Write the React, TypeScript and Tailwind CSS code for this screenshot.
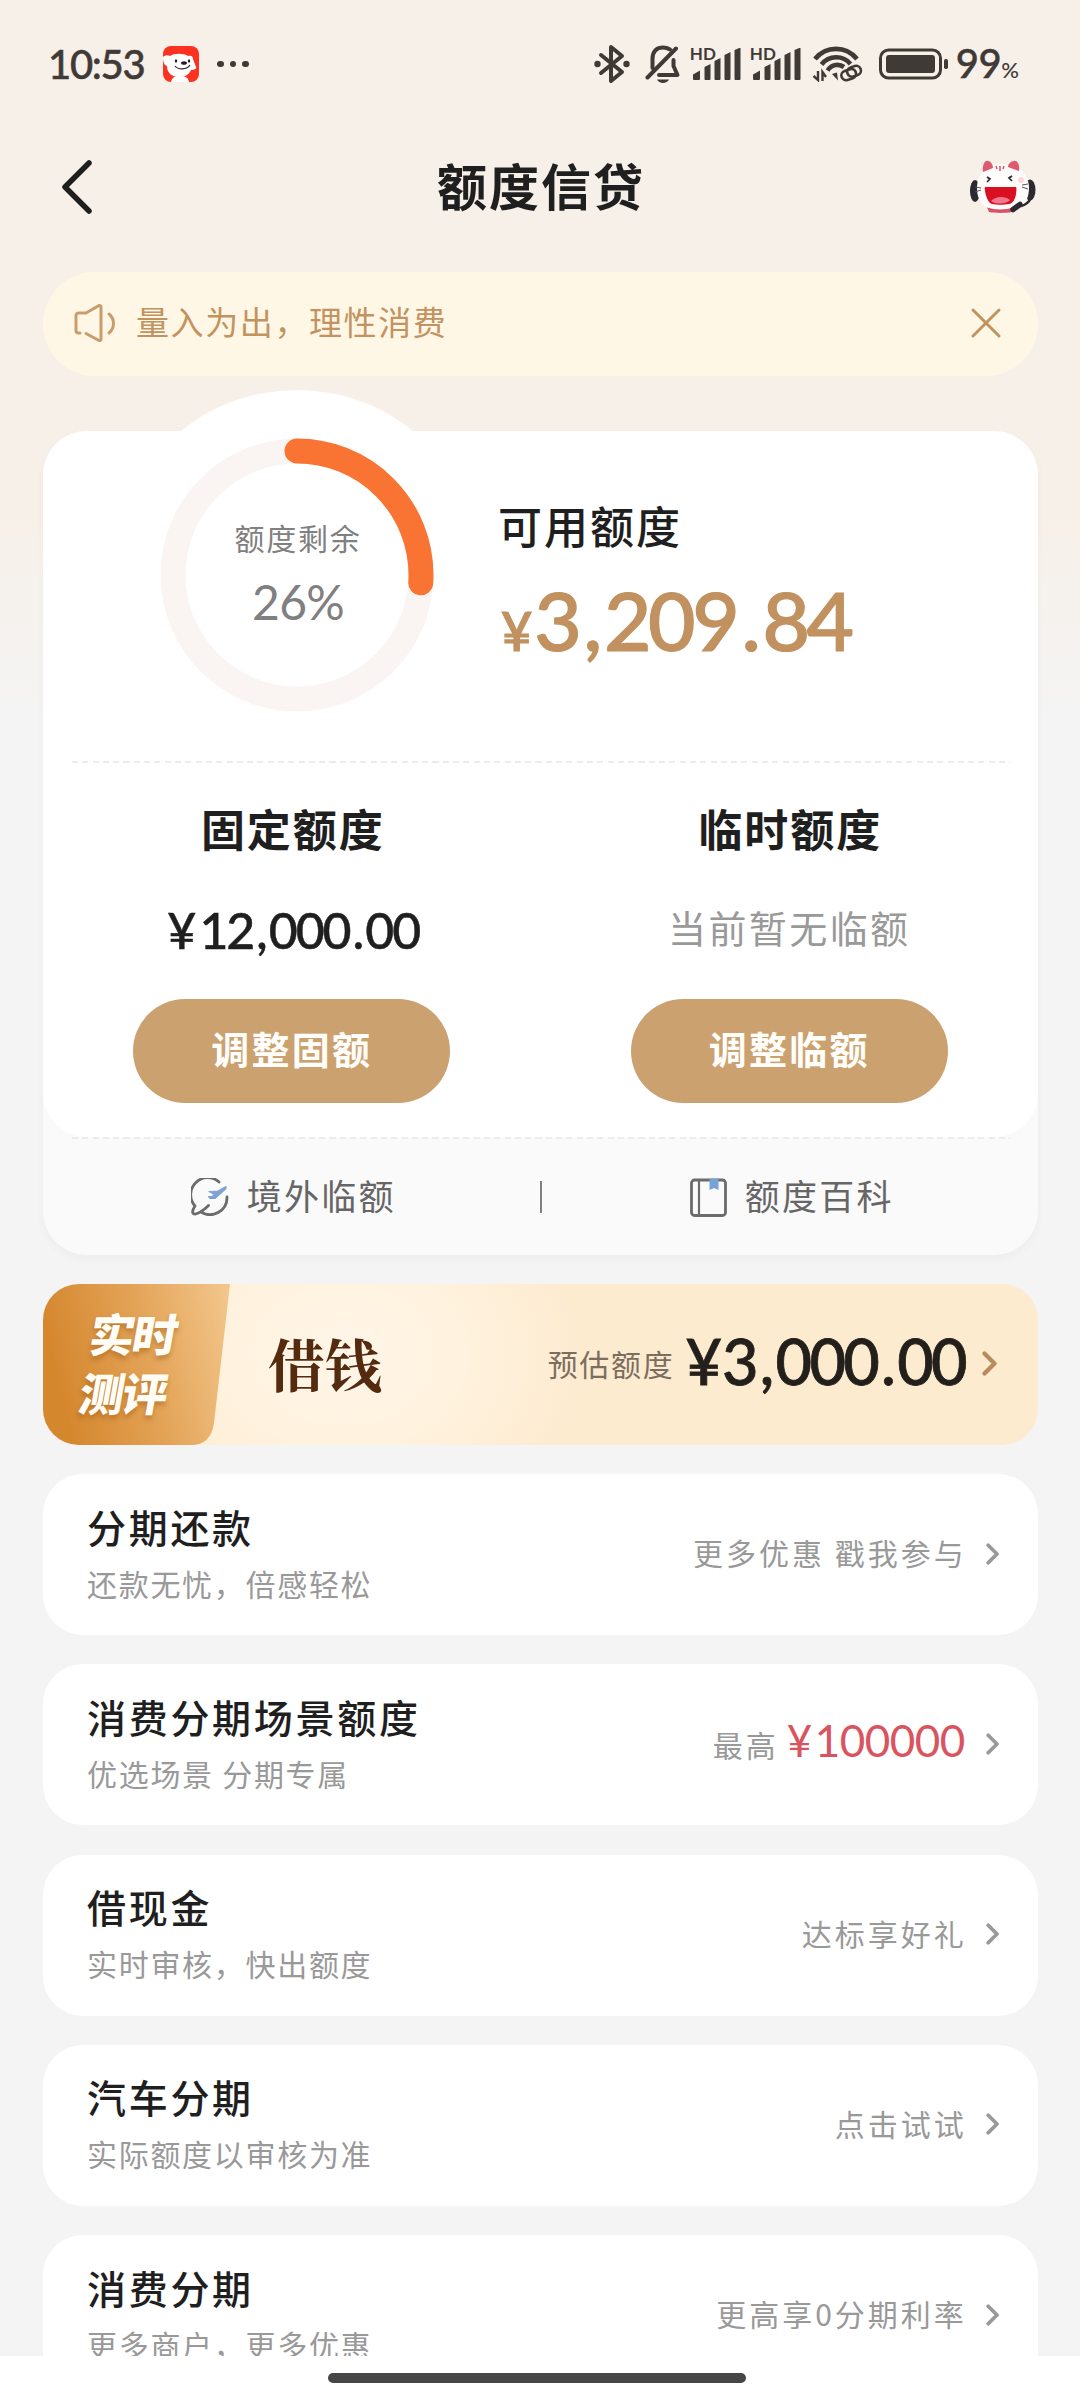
import type { ReactNode } from 'react';

type Product = {
    title: string;
    desc: string;
    hint: string;
    amount?: string;
};

const products: Product[] = [
    { title: '分期还款', desc: '还款无忧，倍感轻松', hint: '更多优惠 戳我参与' },
    { title: '消费分期场景额度', desc: '优选场景 分期专属', hint: '最高', amount: '100000' },
    { title: '借现金', desc: '实时审核，快出额度', hint: '达标享好礼' },
    { title: '汽车分期', desc: '实际额度以审核为准', hint: '点击试试' },
    { title: '消费分期', desc: '更多商户，更多优惠', hint: '更高享0分期利率' },
];

/* ---------- Icons ---------- */

function AppIcon() {
    return (
        <svg width="36" height="36" viewBox="0 0 36 36">
            <rect width="36" height="36" rx="8" fill="#fb3220" />
            <path d="M8 36c1-5 4-6 9-6s8 1 9 6z" fill="#fff" />
            <path d="M0 11c2-2 5-2 7-1 4-3 14-3 18 0 3-1 5 0 5 3l3 8c1 2-2 3-5 3-2 5-7 7-12 7C9 31 4 27 4 20c-3-1-4-4-4-9z" fill="#fff" />
            <ellipse cx="13" cy="15" rx="1.2" ry="1.8" fill="#222" />
            <ellipse cx="26" cy="15" rx="1.2" ry="1.8" fill="#222" />
            <ellipse cx="21" cy="17" rx="3" ry="1.8" fill="#222" />
            <path d="M12 20c3 4 12 4 15-1" fill="none" stroke="#222" strokeWidth="1.2" />
        </svg>
    );
}

function BluetoothIcon() {
    return (
        <svg width="36" height="40" viewBox="0 0 36 40" fill="none" stroke="#403a36" strokeWidth="4" strokeLinecap="round" strokeLinejoin="round">
            <path d="M7 11 L28 28 L17 37 V3 L28 12 L7 29" />
            <circle cx="3.5" cy="20" r="3.200" fill="#403a36" stroke="none" />
            <circle cx="32.5" cy="20" r="3.200" fill="#403a36" stroke="none" />
        </svg>
    );
}

function BellOffIcon() {
    return (
        <svg width="36" height="40" viewBox="0 0 36 40" fill="none" stroke="#403a36" strokeWidth="4" strokeLinecap="round" strokeLinejoin="round">
            <path d="M2.500 33.500 L31 4.500" />
            <path d="M7.500 24 V15 C7.500 7 12 3.500 18 3.500 C21 3.500 23 4.200 25 5.500" />
            <path d="M28.500 16 V22 L32.500 31 H14" />
            <path d="M12 35.500 H24 C22 40 14 40 12 35.500z" fill="#403a36" stroke="none" />
        </svg>
    );
}

function SignalIcon() {
    return (
        <div className="relative h-[32px] w-[50px]">
            <span className="absolute -top-[3px] -left-px text-[17px] leading-[17px] font-bold [font-family:Lato,sans-serif]">HD</span>
            <svg className="absolute top-0 left-[2px]" width="48" height="32" viewBox="0 0 48 32" fill="#403a36">
                <path d="M0 26.500l7-4v8.500q0 1-1 1H1q-1 0-1-1z M11.500 19l6-3v15q0 1-1 1h-4q-1 0-1-1z M21.500 13l6-3v21q0 1-1 1h-4q-1 0-1-1z M31.500 7l6-3v27q0 1-1 1h-4q-1 0-1-1z M41.500 2l6-2.500v31.500q0 1-1 1h-4q-1 0-1-1z" />
            </svg>
        </div>
    );
}

function WifiIcon() {
    return (
        <svg width="50" height="36" viewBox="0 0 50 36" fill="none" stroke="#403a36">
            <path d="M2 13 C13 -0.500 33 -0.500 44 13" strokeWidth="4.600" />
            <path d="M8.500 18.500 C16 9 30 9 37.500 18" strokeWidth="4.600" />
            <path d="M14.500 24.500 C19 18 26 17.500 31 21" strokeWidth="4.600" />
            <path d="M19 28 L24 26.500 L25 34.500z" fill="#403a36" stroke="none" />
            <path d="M5 25 V34 L0.500 30 M9.500 35 V26 L13 31" strokeWidth="2.400" />
            <rect x="28" y="24" width="15" height="9.500" rx="4.750" strokeWidth="2.600" transform="rotate(-18 35 28)" />
            <rect x="34" y="20.500" width="14" height="9.500" rx="4.750" strokeWidth="2.600" transform="rotate(-18 41 25)" />
        </svg>
    );
}

function BatteryIcon() {
    return (
        <svg width="70" height="32" viewBox="0 0 70 32">
            <rect x="1.500" y="2" width="60" height="28" rx="8" fill="none" stroke="#403a36" strokeWidth="3" />
            <rect x="7" y="7" width="49" height="18" rx="3" fill="#403a36" />
            <rect x="65" y="11" width="4" height="10" rx="1.800" fill="#403a36" />
        </svg>
    );
}

// Customer service mascot with a headset
function MascotIcon() {
    return (
        <svg width="66" height="54" viewBox="0 0 66 54">
            <ellipse cx="5" cy="31" rx="5" ry="11" fill="#2d2930" />
            <ellipse cx="60" cy="30" rx="5.500" ry="10.500" fill="#2d2930" />
            <path d="M7 28C7 13 17 4 32 4s27 9 27 24-9 23-26 23S7 43 7 28z" fill="#fffcfc" />
            <path d="M13 12c-1-7 2-12 5-11 3 0 5 4 5 7z" fill="#df5a6e" />
            <path d="M49 11c1-7-2-11-5-10-3 0-6 3-6 6z" fill="#df5a6e" />
            <path d="M17 47.500c8 2.500 19 2.500 26 0l-1 4.500c-7 1.200-17 1.200-23 0z" fill="#dc5064" />
            <path d="M15 27h31c1 0 1 16-7 17-5 1-12 1-17 0-6-2-8-17-7-17z" fill="#d90f22" />
            <path d="M21 41c5-5 14-5 19-1-3 4-14 5-19 1z" fill="#f0788a" />
            <path d="M26 6l1 3M30 6v5M34 6l-1 3" stroke="#dc5064" strokeWidth="1.500" />
            <path d="M17 17l3 2-3 3M42 16l-3 2 3 3" fill="none" stroke="#2d2930" strokeWidth="1.700" />
            <path d="M5 27l6 1M5 32l6-2M58 24l-6 1M58 29l-6-2" stroke="#555" strokeWidth="1" />
            <circle cx="51" cy="20" r="3" fill="#fdd7dc" />
            <path d="M61 38c-2 4-5 7-10 8" fill="none" stroke="#2d2930" strokeWidth="2.500" />
            <path d="M50 44.500l-7 5" stroke="#2d2930" strokeWidth="5.500" strokeLinecap="round" />
        </svg>
    );
}

function SpeakerIcon() {
    return (
        <svg width="42" height="40" viewBox="0 0 42 40" fill="none" stroke="#c99d6b" strokeWidth="3" strokeLinecap="round" strokeLinejoin="round">
            <path d="M6 30 H4.500 A2.500 2.500 0 0 1 2 27.500 V12.500 A2.500 2.500 0 0 1 4.500 10 H12 L25 2.500 A1.500 1.500 0 0 1 27 4 V36 A1.500 1.500 0 0 1 25 37.500 L12 30.500" />
            <path d="M35 11 C41 16 41 25 35 30" />
        </svg>
    );
}

function OverseasIcon() {
    return (
        <svg width="38" height="38" viewBox="0 0 38 38" fill="none" strokeLinecap="round" strokeLinejoin="round">
            <path d="M28 4 A17 17 0 0 0 4 28 C0.500 33 1 36.500 4.500 36 C9 35 14 31 17.500 27.500" stroke="#6b6b6b" strokeWidth="2.800" />
            <path d="M36 19 A17 17 0 0 1 10 34" stroke="#6b6b6b" strokeWidth="2.800" />
            <path d="M35 8.500 L27 13 L18 13.500 L23.500 16.500 L21 18.500 L17.500 18.500 L19 20.500 H24 L35 10.500z" fill="#7ea3d0" stroke="#7ea3d0" strokeWidth="1.200" />
        </svg>
    );
}

function BookIcon() {
    return (
        <svg width="37" height="39" viewBox="0 0 37 39" fill="none">
            <rect x="1.500" y="2" width="34" height="35.500" rx="3" stroke="#6b6b6b" strokeWidth="2.800" />
            <path d="M9 2 V37" stroke="#6b6b6b" strokeWidth="2.200" />
            <path d="M19.500 0.500 h9 v11.500 l-4.500-2 l-4.500 2z" fill="#78a3d6" />
        </svg>
    );
}

function Chevron({ size, color }: { size: number; color: string }) {
    return (
        <svg width={size * 0.6} height={size} viewBox="0 0 12 20" fill="none">
            <path d="M2 2 L10 10 L2 18" stroke={color} strokeWidth="3.400" strokeLinecap="round" strokeLinejoin="round" />
        </svg>
    );
}

// Tight digits with roomy commas and dots
function Money({ value }: { value: string }) {
    return (
        <span className="tracking-[-0.042em]">
            {value.split(/([.,])/).map((part, i) =>
                part === '.' || part === ',' ? (
                    <span key={i} className="px-[0.062em]">{part}</span>
                ) : (
                    part
                )
            )}
        </span>
    );
}

/* ---------- Sections ---------- */

function StatusBar() {
    return (
        <div className="flex h-[128px] shrink-0 items-center pl-[48px] text-[#403a36] [font-family:Lato,sans-serif]">
            <span className="w-[115px] text-[40px] leading-[40px] font-medium tracking-[-1.300px] [-webkit-text-stroke:0.5px_#403a36]">10:53</span>
            <AppIcon />
            <div className="ml-[18px] flex gap-[6px]">
                <i className="size-[6.500px] rounded-full bg-[#403a36]" />
                <i className="size-[6.500px] rounded-full bg-[#403a36]" />
                <i className="size-[6.500px] rounded-full bg-[#403a36]" />
            </div>
            <div className="ml-auto flex items-center pr-[61px]">
                <BluetoothIcon />
                <div className="ml-[15px]"><BellOffIcon /></div>
                <div className="ml-[10px]"><SignalIcon /></div>
                <div className="ml-[10px]"><SignalIcon /></div>
                <div className="ml-[12px]"><WifiIcon /></div>
                <div className="ml-[16px]"><BatteryIcon /></div>
                <span className="ml-[7px] flex items-baseline font-medium">
                    <span className="text-[40px] leading-[40px] tracking-[-0.500px] [-webkit-text-stroke:0.5px_#403a36]">99</span>
                    <span className="text-[22px]">%</span>
                </span>
            </div>
        </div>
    );
}

function TitleBar() {
    return (
        <header className="flex h-[118px] shrink-0 items-center justify-between pr-[44px] pl-[60px]">
            <svg width="34" height="56" viewBox="0 0 34 56" fill="none">
                <path d="M29 4 L5 28 L29 52" stroke="#1f1f1f" strokeWidth="5.500" strokeLinecap="round" strokeLinejoin="round" />
            </svg>
            <h1 className="ml-[18px] pb-[6px] text-[50px] leading-[60px] font-bold tracking-[2px] text-[#1f1f1f]">额度信贷</h1>
            <MascotIcon />
        </header>
    );
}

function Notice() {
    return (
        <div className="mt-[26px] flex h-[104px] shrink-0 items-center rounded-full bg-[#fff7e6] pr-[36px] pb-[2px] pl-[31px] text-[#c3935f]">
            <SpeakerIcon />
            <p className="ml-[20px] pb-[4px] text-[33px] leading-[40px] tracking-[1.600px]">量入为出，理性消费</p>
            <svg className="ml-auto" width="32" height="32" viewBox="0 0 32 32" fill="none">
                <path d="M3 3 L29 29 M29 3 L3 29" stroke="#c3935f" strokeWidth="3" strokeLinecap="round" />
            </svg>
        </div>
    );
}

function Ring({ percent }: { percent: number }) {
    const r = 124;
    const length = 2 * Math.PI * r;
    return (
        <div className="relative size-[274px]">
            <svg className="absolute inset-0 -rotate-90" width="274" height="274" viewBox="0 0 274 274" fill="none" strokeWidth="25">
                <circle cx="137" cy="137" r={r} stroke="#faf5f2" />
                <circle cx="137" cy="137" r={r} stroke="#f97432" strokeLinecap="round" strokeDasharray={`${(length * percent) / 100} ${length}`} />
            </svg>
            <div className="relative flex h-full flex-col items-center pt-[79px] pl-[2px] text-[#808080]">
                <span className="text-[30px] leading-[40px] tracking-[1.700px]">额度剩余</span>
                <span className="mt-[21px] text-[48px] leading-[48px] tracking-[-0.800px] [font-family:Lato,sans-serif]">{percent}%</span>
            </div>
        </div>
    );
}

function DashedLine() {
    return (
        <div className="mr-[28px] ml-[29px] h-[2px] shrink-0 bg-[repeating-linear-gradient(90deg,#ececec_0_6px,transparent_6px_10.300px)]" />
    );
}

function LimitColumn({ title, action, children }: { title: string; action: string; children: ReactNode }) {
    return (
        <div className="flex flex-1 flex-col items-center pt-[39px]">
            <h3 className="pl-[2px] text-[44px] leading-[52px] font-bold tracking-[1.900px] text-[#1f1f1f]">{title}</h3>
            <div className="mt-[45px] flex h-[60px] items-center">{children}</div>
            <button className="mt-[40px] h-[104px] w-[317px] rounded-full bg-[#cca170] pb-[7px] text-[38px] font-bold tracking-[2.200px] text-[#fffefb]">
                {action}
            </button>
        </div>
    );
}

function LimitCard() {
    return (
        <section className="relative mt-[55px] flex h-[824px] shrink-0 flex-col rounded-[44px] bg-[#fafafa] shadow-[0_4px_10px_rgba(0,0,0,0.03)]">
            <div className="absolute -top-[41px] left-[69px] size-[370px] rounded-full bg-white" />
            <div className="relative flex h-[706px] flex-col rounded-[44px] bg-white">
                <div className="flex h-[330px] pt-[7px] pl-[117px]">
                    <Ring percent={26} />
                    <div className="ml-[64px] pt-[61px]">
                        <h2 className="text-[44px] leading-[52px] font-medium tracking-[2px] text-[#1f1f1f]">可用额度</h2>
                        <p className="mt-[26px] flex items-baseline pl-[3px] leading-[84px] font-medium text-[#c1915f] [-webkit-text-stroke:1.2px_#c1915f] [font-family:Lato,sans-serif]">
                            <span className="pr-[2px] text-[54px]">¥</span>
                            <span className="text-[82px]"><Money value="3,209.84" /></span>
                        </p>
                    </div>
                </div>
                <DashedLine />
                <div className="flex">
                    <LimitColumn title="固定额度" action="调整固额">
                        <span className="flex pt-[3px] pl-[3px] text-[50px] font-medium text-[#1f1f1f] [-webkit-text-stroke:0.5px_#1f1f1f] [font-family:Lato,sans-serif]">
                            <span className="pr-[3px]">¥</span>
                            <Money value="12,000.00" />
                        </span>
                    </LimitColumn>
                    <LimitColumn title="临时额度" action="调整临额">
                        <span className="pb-[6px] text-[38px] tracking-[2.400px] text-[#999]">当前暂无临额</span>
                    </LimitColumn>
                </div>
            </div>
            <DashedLine />
            <div className="flex flex-1 items-center text-[35px] leading-[40px] tracking-[2.300px] text-[#666]">
                <div className="flex flex-1 items-center justify-center gap-[18px] pl-[4px]">
                    <OverseasIcon />
                    <span className="pb-[4px]">境外临额</span>
                </div>
                <i className="h-[32px] w-[2px] bg-[#808080]" />
                <div className="flex flex-1 items-center justify-center gap-[18px] pl-[4px]">
                    <BookIcon />
                    <span className="pb-[4px]">额度百科</span>
                </div>
            </div>
        </section>
    );
}

function LoanBanner() {
    return (
        <section className="relative mt-[29px] flex h-[161px] shrink-0 items-center overflow-hidden rounded-[36px] bg-[#fdebd0] bg-[radial-gradient(ellipse_240px_190px_at_300px_70px,#fff6e9_0%,#fff2de_50%,#fdebd0_100%)] pr-[41px] pb-[2px]">
            <svg className="absolute inset-0" width="190" height="161" viewBox="0 0 190 161">
                <defs>
                    <linearGradient id="tab" x1="0" x2="1" y1="0.200" y2="0">
                        <stop offset="0" stopColor="#d5872e" />
                        <stop offset="0.500" stopColor="#e3a458" />
                        <stop offset="1" stopColor="#f3c78d" />
                    </linearGradient>
                </defs>
                <path d="M0 0 H187 L171 139 Q168 161 148 161 H0z" fill="url(#tab)" />
            </svg>
            <div className="relative flex w-[187px] -skew-x-10 flex-col pb-[4px] text-[45px] leading-[59px] font-black text-[#fffdf6] [text-shadow:0_4px_5px_rgba(150,85,15,0.450)]">
                <span className="pl-[42px] tracking-[-2px]">实时</span>
                <span className="pl-[42px] tracking-[-2px]">测评</span>
            </div>
            <h2 className="relative ml-[38px] pb-[4px] text-[57px] leading-[60px] font-bold text-[#552b10] [font-family:'Noto_Serif_CJK_SC','Noto_Serif_SC','Noto_Sans_CJK_SC',serif]">借钱</h2>
            <span className="ml-auto pb-[2px] text-[30px] leading-[40px] tracking-[1.700px] text-[#7c6e5f]">预估额度</span>
            <span className="mr-[17px] ml-[11px] flex pb-[6px] text-[63px] leading-[64px] font-medium text-[#231f1a] [-webkit-text-stroke:0.8px_#231f1a] [font-family:Lato,sans-serif]">
                <span>¥</span>
                <Money value="3,000.00" />
            </span>
            <Chevron size={25} color="#b98a5c" />
        </section>
    );
}

function ProductRow({ title, desc, hint, amount }: Product) {
    return (
        <li className="flex h-[161px] shrink-0 items-center rounded-[40px] bg-white pr-[39px] pl-[44px]">
            <div className="pb-[5px]">
                <h3 className="text-[39px] leading-[52px] font-medium tracking-[2.700px] text-[#1f1f1f]">{title}</h3>
                <p className="mt-[9px] text-[30px] leading-[44px] tracking-[1.700px] text-[#999]">{desc}</p>
            </div>
            <div className="ml-auto flex items-baseline pb-[5px] text-[30px] leading-[44px] tracking-[3px] text-[#999]">
                <span>{hint}</span>
                {amount && (
                    <span className="mr-[2px] ml-[8px] flex text-[44px] tracking-[-0.500px] text-[#d9545f] [font-family:Lato,sans-serif]">
                        <span className="pr-[3px]">¥</span>
                        {amount}
                    </span>
                )}
            </div>
            <div className="ml-[19px] pb-[2px]">
                <Chevron size={22} color="#999999" />
            </div>
        </li>
    );
}

export default function App() {
    return (
        <div className="flex h-[2400px] w-[1080px] flex-col overflow-hidden bg-white [font-family:'Noto_Sans_CJK_SC',sans-serif]">
            <div className="flex h-[2356px] shrink-0 flex-col overflow-hidden bg-[#f4f4f4] bg-[linear-gradient(180deg,#f7f0e9_0px,#f7f0e8_500px,#f4f4f4_720px)]">
                <StatusBar />
                <TitleBar />
                <main className="flex flex-col pr-[42px] pl-[43px]">
                    <Notice />
                    <LimitCard />
                    <LoanBanner />
                    <ul className="mt-[29px] flex flex-col gap-[29.250px]">
                        {products.map((item) => (
                            <ProductRow key={item.title} {...item} />
                        ))}
                    </ul>
                </main>
            </div>
            <footer className="flex flex-1 justify-center pt-[17px] pr-[6px]">
                <div className="h-[10px] w-[418px] rounded-full bg-[#464646]" />
            </footer>
        </div>
    );
}
